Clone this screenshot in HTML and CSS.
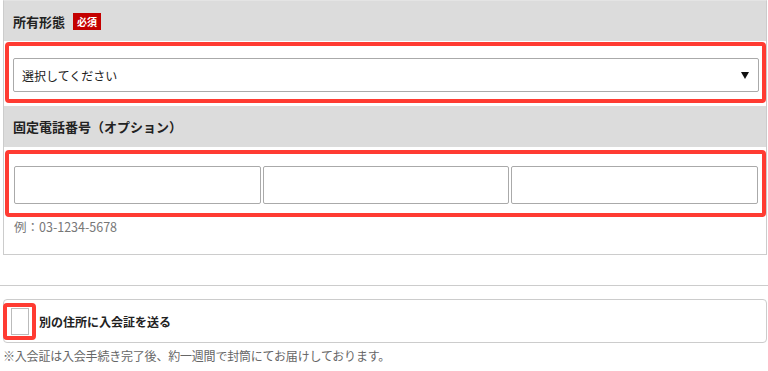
FILE: index.html
```html
<!DOCTYPE html>
<html lang="ja">
<head>
    <meta charset="UTF-8">
    <meta name="viewport" content="width=device-width, initial-scale=1.0">
    <title>入会フォーム</title>
    <link rel="stylesheet" href="styles.css">
</head>
<body>

    <div class="form-box">
        <div class="form-head head-first">
            所有形態 <span class="badge">必須</span>
        </div>
        <div class="form-cell">
            <div class="mark mark-select">
                <div class="select-wrap">
                    <select class="select">
                        <option>選択してください</option>
                        <option>持ち家</option>
                        <option>賃貸</option>
                    </select>
                </div>
            </div>
        </div>

        <div class="form-head head-second">固定電話番号（オプション）</div>
        <div class="form-cell cell-tel">
            <div class="mark mark-tel">
                <input type="text" class="tel">
                <input type="text" class="tel">
                <input type="text" class="tel">
            </div>
            <p class="hint">例：03-1234-5678</p>
        </div>
    </div>

    <hr class="divider">

    <label class="check-row">
        <span class="mark mark-check"><span class="check-box"></span></span>
        <span class="check-label">別の住所に入会証を送る</span>
    </label>
    <p class="note">※入会証は入会手続き完了後、約一週間で封筒にてお届けしております。</p>

</body>
</html>
```

FILE: styles.css
```css
body {
    font-family: "Noto Sans CJK JP", "Liberation Sans", sans-serif;
    font-size: 12px;
    color: #222;
    margin: 0;
    background-color: #fff;
}
.form-box {
    margin: 0 1px 0 3px;
    border: 1px solid #ccc;
    border-top-color: #e4e4e4;
}
.form-head {
    background-color: #dcdcdc;
    font-size: 13px;
    font-weight: bold;
    padding-left: 9px;
    display: flex;
    align-items: center;
    color: #222;
}
.head-first {
    height: 40px;
}
.head-second {
    height: 41px;
}
.badge {
    display: inline-block;
    background-color: #c40000;
    color: #fff;
    font-size: 10px;
    line-height: 17px;
    padding: 0 4px;
    margin-left: 8px;
}
.form-cell {
    background-color: #fff;
    padding: 1px 0 3px 1px;
}
.cell-tel {
    padding: 3px 0 19px 1px;
}
.mark {
    border: 4px solid #ff3b32;
    border-radius: 4px;
}
.mark-select {
    padding: 12px 3px 7px 4px;
}
.select-wrap {
    position: relative;
}
.select-wrap::after {
    content: "";
    position: absolute;
    right: 10px;
    top: 14px;
    border-left: 4px solid transparent;
    border-right: 4px solid transparent;
    border-top: 7px solid #111;
    pointer-events: none;
}
.select {
    appearance: none;
    -webkit-appearance: none;
    width: 100%;
    height: 34px;
    border: 1px solid #aaa;
    border-radius: 2px;
    background-color: #fff;
    font-family: inherit;
    font-size: 12px;
    color: #222;
    padding: 0 8px;
}
.mark-tel {
    display: flex;
    gap: 2px;
    padding: 12px 4px 9px 5px;
}
.tel {
    flex: 1;
    min-width: 0;
    height: 38px;
    box-sizing: border-box;
    border: 1px solid #aaa;
    border-radius: 2px;
    margin: 0;
}
.hint {
    margin: 2px 0 0 9px;
    font-size: 12.5px;
    line-height: 16px;
    color: #777;
}
.divider {
    border: none;
    border-top: 1px solid #ccc;
    margin: 30px 0 13px;
}
.check-row {
    display: flex;
    align-items: center;
    margin: 0 1px 0 3px;
    height: 42px;
    border: 1px solid #ccc;
    border-radius: 4px;
}
.mark-check {
    display: block;
    padding: 1px 3px 1px 4px;
    margin-left: -1px;
}
.check-box {
    display: block;
    width: 16px;
    height: 25px;
    border: 1px solid #bbb;
    background-color: #fff;
}
.check-label {
    font-weight: bold;
    margin-left: 3px;
}
.note {
    margin: 4px 0 0 3px;
    color: #666;
    letter-spacing: -0.2px;
}
```
